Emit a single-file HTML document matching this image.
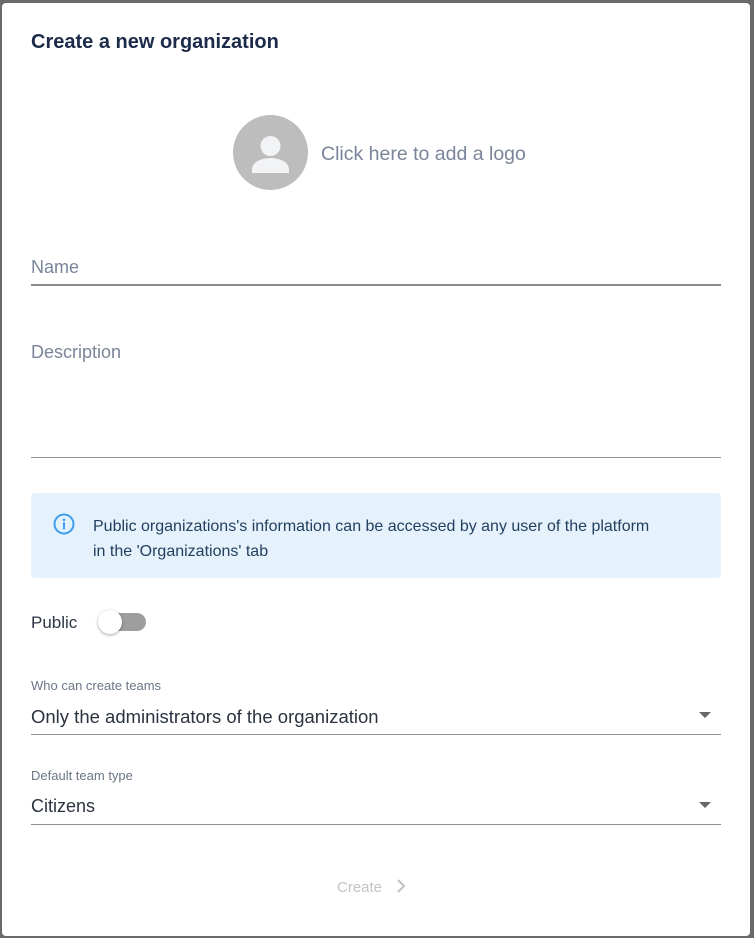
<!DOCTYPE html>
<html><head><style>
*{margin:0;padding:0;box-sizing:border-box}
body{width:754px;height:938px;background:#6a6a6a;font-family:"Liberation Sans",sans-serif;position:relative;overflow:hidden}
.d{position:absolute;left:2px;top:3px;width:748px;height:933px;background:#fff;border-radius:4px}
.a{position:absolute}
.t{left:29px;top:28px;font-size:20px;color:#1c2b4a;font-weight:bold;letter-spacing:0px}
.av{left:231px;top:112px;width:75px;height:75px;border-radius:50%;background:#bdbdbd}
.lbl{font-size:18px;color:#7a8599}
.line{left:29px;width:690px;height:1px;background:#8f8f8f}
.info{left:29px;top:490px;width:690px;height:85px;background:#e5f1fb;border-radius:4px}
.sm{font-size:13px;color:#6b7687}
.val{font-size:18px;color:#2b3340}
</style></head><body>
<div class="d">
<div class="a t">Create a new organization</div>
<div class="a av"><svg width="75" height="75" viewBox="0 0 75 75"><circle cx="37.5" cy="31" r="10" fill="#f2f3f5"/><path d="M19 55c0-9 11-12 18.5-12S56 46 56 55v3H19z" fill="#f2f3f5"/></svg></div>
<div class="a lbl" style="left:319px;top:140px;font-size:19.5px">Click here to add a logo</div>
<div class="a lbl" style="left:29px;top:254px">Name</div>
<div class="a line" style="top:281px;height:2px;background:#8a8a8a"></div>
<div class="a lbl" style="left:29px;top:339px">Description</div>
<div class="a line" style="top:454px"></div>
<div class="a info">
<svg class="a" style="left:22px;top:20px" width="22" height="22" viewBox="0 0 22 22"><circle cx="11" cy="11" r="9.5" fill="none" stroke="#3b9cf0" stroke-width="2"/><circle cx="11" cy="6.8" r="1.3" fill="#3b9cf0"/><rect x="10" y="9.3" width="2" height="7" fill="#3b9cf0"/></svg>
<div class="a" style="left:62px;top:21px;font-size:16px;line-height:25px;color:#234060;width:615px">Public organizations's information can be accessed by any user of the platform<br>in the 'Organizations' tab</div>
</div>
<div class="a" style="left:29px;top:610px;font-size:17px;color:#2b3545">Public</div>
<div class="a" style="left:100px;top:610px;width:44px;height:18px;border-radius:9px;background:#9e9e9e"></div>
<div class="a" style="left:96px;top:607px;width:24px;height:24px;border-radius:50%;background:#fff;box-shadow:0 1px 3px rgba(0,0,0,.35)"></div>
<div class="a sm" style="left:29px;top:675px">Who can create teams</div>
<div class="a val" style="left:29px;top:703px;font-size:18.5px">Only the administrators of the organization</div>
<svg class="a" style="left:697px;top:709px" width="12" height="7"><path d="M0 0h12L6 6z" fill="#666"/></svg>
<div class="a line" style="top:731px"></div>
<div class="a sm" style="left:29px;top:765px">Default team type</div>
<div class="a val" style="left:29px;top:793px">Citizens</div>
<svg class="a" style="left:697px;top:799px" width="12" height="7"><path d="M0 0h12L6 6z" fill="#666"/></svg>
<div class="a line" style="top:821px"></div>
<div class="a" style="left:335px;top:876px;font-size:15px;color:#c4c4c4">Create</div>
<svg class="a" style="left:394px;top:876px" width="10" height="14"><path d="M2 1l6 6-6 6" fill="none" stroke="#c4c4c4" stroke-width="2.2"/></svg>
</div>
</body></html>
